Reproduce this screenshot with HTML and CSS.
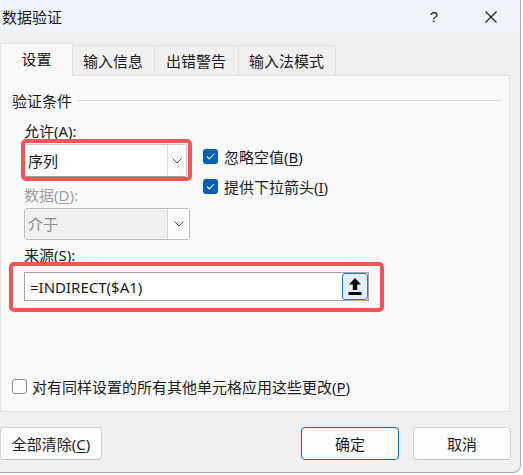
FILE: index.html
```html
<!DOCTYPE html>
<html lang="zh-CN">
<head>
<meta charset="utf-8">
<title>数据验证</title>
<link rel="stylesheet" href="styles.css">
</head>
<body>
<div class="window">
  <header class="titlebar">
    <span class="title">数据验证</span>
    <span class="caption-btn help">?</span>
    <span class="caption-btn close">
      <svg width="12" height="12" viewBox="0 0 12 12"><path d="M0.5 0.5L11.5 11.5M11.5 0.5L0.5 11.5" stroke="#1b1b1b" stroke-width="1.1" fill="none"/></svg>
    </span>
  </header>

  <nav class="tabs">
    <div class="tab active">设置</div>
    <div class="tab">输入信息</div>
    <div class="tab tab-wide">出错警告</div>
    <div class="tab">输入法模式</div>
  </nav>

  <section class="panel">
    <div class="group-title"><span>验证条件</span><span class="rule"></span></div>
    <div class="label">允许(<u>A</u>):</div>
    <div class="row">
      <div class="col">
        <div class="hl-wrap">
          <div class="combo">
            <span class="combo-text">序列</span>
            <span class="combo-arrow"><svg width="10" height="6" viewBox="0 0 10 6"><path d="M0.5 0.5L5 5L9.5 0.5" stroke="#5a5a5a" stroke-width="1" fill="none"/></svg></span>
          </div>
          <div class="highlight hl-allow"></div>
        </div>
        <div class="label disabled-label">数据(<u>D</u>):</div>
        <div class="combo combo-disabled">
          <span class="combo-text">介于</span>
          <span class="combo-arrow"><svg width="10" height="6" viewBox="0 0 10 6"><path d="M0.5 0.5L5 5L9.5 0.5" stroke="#5a5a5a" stroke-width="1" fill="none"/></svg></span>
        </div>
      </div>
      <div class="checks">
        <div class="check">
          <span class="box checked"><svg width="15" height="15" viewBox="0 0 15 15"><path d="M4 7.6L6.3 9.9L11 5.2" stroke="#fff" stroke-width="1.1" fill="none"/></svg></span>
          <span>忽略空值(<u>B</u>)</span>
        </div>
        <div class="check second">
          <span class="box checked"><svg width="15" height="15" viewBox="0 0 15 15"><path d="M4 7.6L6.3 9.9L11 5.2" stroke="#fff" stroke-width="1.1" fill="none"/></svg></span>
          <span>提供下拉箭头(<u>I</u>)</span>
        </div>
      </div>
    </div>
    <div class="label source-label">来源(<u>S</u>):</div>
    <div class="hl-wrap source-wrap">
      <div class="source">
        <span class="source-text">=INDIRECT($A1)</span>
        <span class="pick"><svg width="16" height="20" viewBox="0 0 16 20"><path d="M8 1L14 7.5H10.2V13H5.8V7.5H2Z" fill="#000"/><rect x="1.5" y="15" width="13" height="3" fill="#000"/></svg></span>
      </div>
      <div class="highlight hl-source"></div>
    </div>
    <div class="check apply">
      <span class="box"></span>
      <span>对有同样设置的所有其他单元格应用这些更改(<u>P</u>)</span>
    </div>
  </section>

  <footer class="buttons">
    <div class="btn btn-clear">全部清除(<u>C</u>)</div>
    <div class="spacer"></div>
    <div class="btn btn-ok">确定</div>
    <div class="btn btn-cancel">取消</div>
  </footer>
</div>
</body>
</html>
```

FILE: styles.css
```css
html, body {
  margin: 0;
  padding: 0;
}

body {
  background: #ffffff;
  font-family: "Noto Sans", "Noto Sans CJK SC", sans-serif;
  font-size: 15px;
  color: #1b1b1b;
}

u {
  text-decoration: underline;
  text-underline-offset: 2px;
}

.window {
  width: 520px;
  height: 472px;
  background: #f0f0f0;
  border-right: 1px solid #a9a9a9;
  border-bottom: 1px solid #a9a9a9;
  border-bottom-right-radius: 8px;
  overflow: hidden;
  display: flex;
  flex-direction: column;
}

/* title bar */
.titlebar {
  height: 33px;
  flex: none;
  background: #eef4f9;
  display: flex;
  align-items: center;
  padding: 0 6px 0 2px;
}

.title {
  flex: 1;
  line-height: 18px;
}

.caption-btn {
  width: 46px;
  display: flex;
  justify-content: center;
  align-items: center;
  line-height: 18px;
}

.help {
  margin-right: 11px;
  font-family: "Liberation Sans", sans-serif;
  font-size: 15px;
}

/* tabs */
.tabs {
  display: flex;
  align-items: flex-start;
  margin-top: 10px;
  height: 33px;
  flex: none;
  position: relative;
  z-index: 1;
}

.tab {
  box-sizing: border-box;
  height: 30px;
  margin-top: 2px;
  padding: 0 11px 0 10px;
  border-top: 1px solid #e3e3e3;
  border-right: 1px solid #e3e3e3;
  background: #f0f0f0;
  display: flex;
  align-items: center;
  line-height: 18px;
}

.tab.tab-wide {
  padding: 0 12px 0 11px;
}

.tab.active {
  width: 73px;
  height: 33px;
  margin-top: 0;
  padding: 0 0 2px;
  justify-content: center;
  border-left: 1px solid #e3e3e3;
  background: #f9f9f9;
}

/* panel */
.panel {
  margin-top: -1px;
  width: 510px;
  height: 337px;
  flex: none;
  box-sizing: border-box;
  border: 1px solid #e3e3e3;
  background: #f9f9f9;
  display: flex;
  flex-direction: column;
}

.group-title {
  margin-top: 16px;
  height: 18px;
  line-height: 18px;
  padding-left: 11px;
  padding-right: 8px;
  display: flex;
  align-items: center;
}

.rule {
  flex: 1;
  height: 1px;
  margin-left: 5px;
  margin-top: -1px;
  background: #dadada;
}

.label {
  margin-top: 12px;
  padding-left: 23px;
  height: 18px;
  line-height: 18px;
}

.row {
  margin-top: 4px;
  display: flex;
}

.col {
  width: 166px;
  margin-left: 23px;
  display: flex;
  flex-direction: column;
}

.col .label {
  padding-left: 0;
}

.disabled-label {
  margin-top: 9px;
  color: #a0a0a0;
}

.hl-wrap {
  position: relative;
}

.highlight {
  position: absolute;
  border: 4px solid #f25558;
  border-radius: 5px;
  pointer-events: none;
}

.hl-allow {
  left: -3px;
  top: -5px;
  width: 163px;
  height: 34px;
}

.combo {
  box-sizing: border-box;
  width: 163px;
  height: 33px;
  border: 1px solid #c8c8c8;
  border-bottom-color: #9a9a9a;
  border-radius: 3px;
  background: #ffffff;
  display: flex;
}

.combo-text {
  flex: 1;
  padding-left: 3px;
  display: flex;
  align-items: center;
  line-height: 18px;
}

.combo-arrow {
  width: 18px;
  border-left: 1px solid #dcdcdc;
  background: #fdfdfd;
  display: flex;
  align-items: center;
  justify-content: center;
}

.combo-disabled {
  width: 166px;
  height: 32px;
  margin-top: 4px;
  border-color: #bdbdbd;
  background: #f0f0f0;
  color: #8c8c8c;
}

.combo-disabled .combo-arrow {
  width: 21px;
  background: #fbfbfb;
  border-left-color: #d6d6d6;
}

/* checkboxes */
.checks {
  margin-left: 13px;
  padding-top: 5px;
  display: flex;
  flex-direction: column;
}

.check {
  display: flex;
  align-items: center;
  gap: 6px;
  height: 15px;
  line-height: 18px;
}

.check.second {
  margin-top: 15px;
}

.box {
  box-sizing: border-box;
  width: 15px;
  height: 15px;
  flex: none;
  border-radius: 3px;
  border: 1px solid #8a8a8a;
  background: #fbfbfb;
  display: flex;
}

.box.checked {
  border: none;
  background: #005fb8;
}

/* source */
.source-label {
  margin-top: 6px;
}

.source-wrap {
  margin-top: 8px;
  margin-left: 23px;
}

.source {
  box-sizing: border-box;
  width: 345px;
  height: 29px;
  border: 1px solid #a3a3a3;
  background: #ffffff;
  display: flex;
  align-items: center;
}

.source-text {
  flex: 1;
  padding-left: 5px;
  line-height: 18px;
}

.pick {
  box-sizing: border-box;
  width: 26px;
  height: 27px;
  border: 1px solid #1a7fd6;
  border-radius: 3px;
  background: #e3eefa;
  display: flex;
  align-items: center;
  justify-content: center;
}

.hl-source {
  left: -15px;
  top: -10px;
  width: 367px;
  height: 42px;
}

.apply {
  margin-top: 78px;
  margin-left: 11px;
  gap: 5px;
}

/* buttons */
.buttons {
  margin-top: 15px;
  padding-right: 9px;
  display: flex;
}

.spacer {
  flex: 1;
}

.btn {
  box-sizing: border-box;
  height: 33px;
  width: 98px;
  border: 1px solid #d3d3d3;
  border-bottom-color: #c2c2c2;
  border-radius: 4px;
  background: #fdfdfd;
  display: flex;
  align-items: center;
  justify-content: center;
  line-height: 18px;
}

.btn-clear {
  width: 102px;
}

.btn-ok {
  margin-right: 14px;
  border-color: #0067c0;
}
```
